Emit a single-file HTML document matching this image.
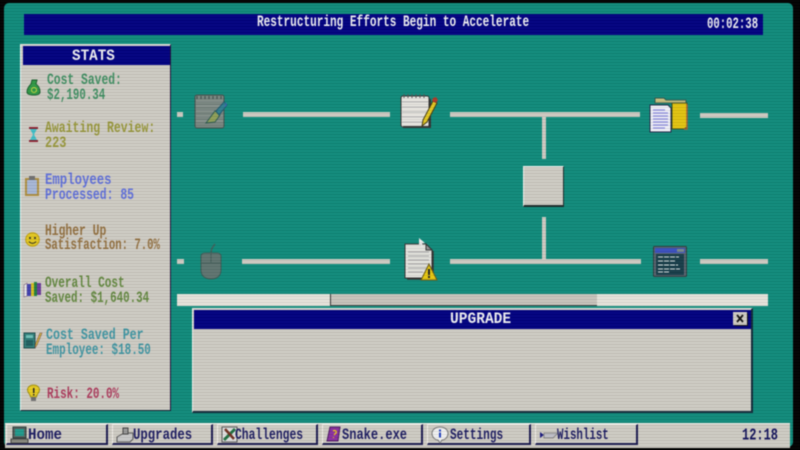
<!DOCTYPE html>
<html><head><meta charset="utf-8"><style>
html,body{margin:0;padding:0;background:#000;width:800px;height:450px;overflow:hidden}
#s{position:absolute;left:0;top:0;width:800px;height:450px;overflow:hidden;background:#000;filter:blur(.55px)}
#d{position:absolute;left:4px;top:3px;width:789px;height:444px;background:#0f8b7b;border-radius:5px}
.a{position:absolute}
.t{position:absolute;font-family:"Liberation Mono",monospace;font-weight:bold;font-size:14px;line-height:15px;white-space:nowrap;transform-origin:0 0;scale:1 1.12}
.p{position:absolute;background:#d0ccc4}
.l{position:absolute;background:#cfcbc3}
.b{position:absolute;top:424px;height:21px;background:#d0ccc4;border-top:1px solid #f2f0ea;border-left:1px solid #f2f0ea;border-right:2px solid #1a1a50;border-bottom:2px solid #1a1a50;box-sizing:border-box}
.b span{position:absolute;top:2px;font-family:"Liberation Mono",monospace;font-weight:bold;font-size:14px;line-height:15px;color:#1c1c62;white-space:nowrap;transform-origin:0 0;scale:1 1.12}
.b svg{position:absolute;left:3px;top:1px}
#o{position:absolute;left:0;top:0;width:800px;height:450px;pointer-events:none;background:repeating-linear-gradient(0deg,rgba(0,0,0,.09) 0,rgba(0,0,0,.09) 1px,rgba(255,255,255,.03) 1px,rgba(255,255,255,.03) 3px)}
</style></head><body>
<div id="s">
<div id="d"></div>

<div class="a" style="left:24px;top:14px;width:739px;height:21px;background:#000080"></div>
<div class="t" style="left:257px;top:15px;color:#f2f2f5;transform:scaleX(.79)">Restructuring Efforts Begin to Accelerate</div>
<div class="t" style="left:707px;top:17px;color:#f2f2f5;transform:scaleX(.76)">00:02:38</div>

<div class="p" style="left:20px;top:44px;width:151px;height:367px;border-top:1px solid #f5f4ef;border-left:1px solid #e8fbfa;border-right:1px solid #20103a;border-bottom:1px solid #102030;box-sizing:border-box"></div>
<div class="a" style="left:23px;top:46px;width:147px;height:19px;background:#000080"></div>
<div class="t" style="left:72px;top:49px;color:#f2f2f5;transform:scaleX(1.02)">STATS</div>

<div class="t" style="left:47px;top:73px;color:#3f8f62;transform:scaleX(.81)">Cost Saved:</div>
<div class="t" style="left:47px;top:88px;color:#3f8f62;transform:scaleX(.77)">$2,190.34</div>
<div class="t" style="left:45px;top:121px;color:#98983a;transform:scaleX(.82)">Awaiting Review:</div>
<div class="t" style="left:45px;top:136px;color:#98983a;transform:scaleX(.85)">223</div>
<div class="t" style="left:45px;top:173px;color:#5f70dc;transform:scaleX(.88)">Employees</div>
<div class="t" style="left:45px;top:188px;color:#5f70dc;transform:scaleX(.815)">Processed: 85</div>
<div class="t" style="left:45px;top:224px;color:#93703f;transform:scaleX(.81)">Higher Up</div>
<div class="t" style="left:45px;top:238px;color:#93703f;transform:scaleX(.76)">Satisfaction: 7.0%</div>
<div class="t" style="left:45px;top:276px;color:#62883f;transform:scaleX(.79)">Overall Cost</div>
<div class="t" style="left:45px;top:291px;color:#62883f;transform:scaleX(.775)">Saved: $1,640.34</div>
<div class="t" style="left:46px;top:328px;color:#3f96a3;transform:scaleX(.83)">Cost Saved Per</div>
<div class="t" style="left:46px;top:343px;color:#3f96a3;transform:scaleX(.78)">Employee: $18.50</div>
<div class="t" style="left:47px;top:387px;color:#ad3a5c;transform:scaleX(.78)">Risk: 20.0%</div>

<svg class="a" style="left:26px;top:79px" width="16" height="17" viewBox="0 0 16 17"><path d="M6 1h5l-1 4c3 2 4 5 4 8 0 2-2 3-6 3s-7-1-7-3c0-3 2-6 4-8z" fill="#2f9a45" stroke="#1c6030"/><circle cx="8" cy="11" r="2.500" fill="none" stroke="#c6d840"/></svg>
<svg class="a" style="left:28px;top:126px" width="11" height="17" viewBox="0 0 11 17"><rect x="1" y="1" width="9" height="2" fill="#8c2030"/><rect x="1" y="14" width="9" height="2" fill="#8c2030"/><path d="M2 3h7L6 8.500 9 14H2l3-5.500z" fill="#3fc0c8"/></svg>
<svg class="a" style="left:24px;top:176px" width="16" height="21" viewBox="0 0 16 21"><rect x="1" y="2" width="14" height="18" fill="#b09040"/><rect x="3" y="4" width="10" height="14" fill="#a8b8d8"/><rect x="5" y="0" width="6" height="4" fill="#707070"/></svg>
<svg class="a" style="left:25px;top:232px" width="15" height="15" viewBox="0 0 15 15"><circle cx="7.500" cy="7.500" r="6.800" fill="#e3c820" stroke="#c0a010"/><circle cx="5" cy="6" r="1" fill="#222"/><circle cx="10" cy="6" r="1" fill="#222"/><path d="M4 9.500c2 2.500 5 2.500 7 0" fill="none" stroke="#222"/></svg>
<svg class="a" style="left:23px;top:280px" width="19" height="18" viewBox="0 0 19 18"><path d="M1 5l3-2v13l-3 1z" fill="#e8e8e8" stroke="#806080" stroke-width=".6"/><rect x="4" y="4" width="4" height="12" fill="#4040b0"/><rect x="8" y="3" width="3" height="13" fill="#d8c020"/><rect x="11" y="2" width="3" height="14" fill="#208040"/><rect x="14" y="3" width="4" height="12" fill="#6a3a9a"/></svg>
<svg class="a" style="left:23px;top:332px" width="21" height="18" viewBox="0 0 21 18"><rect x="1" y="1" width="11" height="15" fill="#2f7f7a" stroke="#1f4f50"/><rect x="3" y="3" width="7" height="3" fill="#6fc0b8"/><rect x="3" y="8" width="7" height="6" fill="#1f5f60"/><path d="M19 1l-5 12-2 3 .5-4 4.500-11z" fill="#d8c040" stroke="#805040" stroke-width=".6"/></svg>
<svg class="a" style="left:26px;top:384px" width="15" height="18" viewBox="0 0 15 18"><path d="M7.500 1c4 0 6 2.500 6 5 0 3-3 4-3 7h-6c0-3-3-4-3-7 0-2.500 2-5 6-5z" fill="#e8cc20" stroke="#a09010"/><rect x="5" y="13" width="5" height="4" fill="#707070"/><rect x="7" y="4" width="1.500" height="5" fill="#222"/><rect x="7" y="10" width="1.500" height="1.500" fill="#222"/></svg>

<div class="l" style="left:177px;top:112px;width:6px;height:5px"></div>
<div class="l" style="left:243px;top:112px;width:147px;height:5px"></div>
<div class="l" style="left:450px;top:112px;width:190px;height:5px"></div>
<div class="l" style="left:700px;top:113px;width:68px;height:5px"></div>
<div class="l" style="left:177px;top:259px;width:7px;height:5px"></div>
<div class="l" style="left:242px;top:259px;width:148px;height:5px"></div>
<div class="l" style="left:450px;top:259px;width:191px;height:5px"></div>
<div class="l" style="left:700px;top:259px;width:68px;height:5px"></div>
<div class="l" style="left:542px;top:115px;width:4px;height:44px"></div>
<div class="l" style="left:542px;top:217px;width:4px;height:45px"></div>

<div class="p" style="left:523px;top:166px;width:41px;height:41px;border-top:1px solid #f5f4ef;border-left:1px solid #f5f4ef;border-right:1px solid #1c2a2a;border-bottom:2px solid #1c2a2a;box-sizing:border-box"></div>

<svg class="a" style="left:193px;top:94px" width="36" height="36" viewBox="0 0 36 36"><rect x="2" y="1" width="29" height="33" rx="2" fill="#78857f" stroke="#41524e"/><path d="M3 7h27M3 12h27M3 17h27M3 22h27M3 27h27" stroke="#8f9a94"/><path d="M4 2v3M8 2v3M12 2v3M16 2v3M20 2v3M24 2v3M28 2v3" stroke="#3d4c48"/><path d="M13 29l9-12 5 4-5 7z" fill="#8f9f58" stroke="#2c5a50"/><path d="M23 17l8-9 3 3-8 10z" fill="#2f7f90" stroke="#1d5a70"/><path d="M33 8l1 3-3 3z" fill="#3a68b0"/></svg>
<svg class="a" style="left:400px;top:93px" width="40" height="37" viewBox="0 0 40 37"><rect x="1" y="3" width="28" height="31" rx="2" fill="#e8e6e0" stroke="#333"/><path d="M3 34h27V6" fill="none" stroke="#333" stroke-width="2"/><path d="M2 9h26M2 14h26M2 19h26M2 24h26M2 29h26" stroke="#b8b8b8"/><path d="M4 1v4M8 1v4M12 1v4M16 1v4M20 1v4M24 1v4" stroke="#555"/><path d="M33 8l4 2-10 19-5 4 1-6z" fill="#e4c820" stroke="#443a10"/><path d="M33 5l3-1 2 3-2 3-4-2z" fill="#b03a28"/></svg>
<svg class="a" style="left:648px;top:95px" width="42" height="38" viewBox="0 0 42 38"><path d="M7 6V3h9l2 2h20v3H7z" fill="#c8c080" stroke="#2d5a50"/><path d="M24 8h15v24l-3 2H24z" fill="#e4c410" stroke="#3c4c20"/><path d="M36 34h3V9" fill="none" stroke="#a86030" stroke-width="1.500"/><path d="M2 10h18l3 3v24H2z" fill="#f0f0f8" stroke="#202848"/><path d="M5 15h12M5 18h15M5 21h15M5 24h15M5 27h15M5 30h15M5 33h12" stroke="#8888e0" stroke-width="1.200"/></svg>
<svg class="a" style="left:198px;top:241px" width="26" height="40" viewBox="0 0 26 40"><path d="M13 13c0-5 1-6 4-10" fill="none" stroke="#3f5f5a" stroke-width="1.500"/><path d="M3 15c0-2 2-3 4-3h12c2 0 4 1 4 3v14c0 6-4 9-10 9S3 35 3 29z" fill="#5f7470" stroke="#3a5a55"/><path d="M3 22h20M13 12v10" stroke="#445f5a"/></svg>
<svg class="a" style="left:402px;top:242px" width="36" height="40" viewBox="0 0 36 40"><path d="M3 2h21l6 6v28H3z" fill="#e4e3de" stroke="#333"/><path d="M31 9v28H5" fill="none" stroke="#333" stroke-width="1.500"/><path d="M24 2v6h6z" fill="#999" stroke="#333"/><path d="M6 10h21M6 14h21M6 18h21M6 22h21M6 26h21M6 30h15" stroke="#aeaeae" stroke-width="1.200"/><path d="M27 22l8 16H19z" fill="#e8c810" stroke="#6a5a10"/><path d="M27 27v6M27 34v2" stroke="#222" stroke-width="2"/></svg>
<svg class="a" style="left:419px;top:238px" width="7" height="9" viewBox="0 0 7 9"><path d="M0 0l6 5-3 .5 1 3-1.500 .5-1-3L0 7z" fill="#eee"/></svg>
<svg class="a" style="left:653px;top:246px" width="34" height="31" viewBox="0 0 34 31"><rect x=".5" y=".5" width="33" height="30" rx="1" fill="#5a6470" stroke="#2c3a3e"/><rect x="2" y="2" width="30" height="5" fill="#3a50c0"/><rect x="24" y="3" width="7" height="3" fill="#7a8a8a"/><rect x="3" y="8" width="28" height="21" fill="#163c48"/><path d="M5 11h21M5 15h17M5 19h20M5 23h22M5 26h12" stroke="#dfe6e6" stroke-width="1" stroke-dasharray="5 1"/></svg>

<div class="a" style="left:177px;top:294px;width:591px;height:12px;background:#e6e4dc"></div>
<div class="a" style="left:330px;top:294px;width:267px;height:12px;background:#c8c4bc;border-left:1px solid #333;border-bottom:1px solid #444;box-sizing:border-box"></div>

<div class="p" style="left:192px;top:308px;width:561px;height:105px;border-top:1px solid #f2f1ec;border-left:1px solid #f2f1ec;border-right:2px solid #102838;border-bottom:2px solid #102838;box-sizing:border-box"></div>
<div class="a" style="left:194px;top:310px;width:557px;height:19px;background:#000080"></div>
<div class="t" style="left:450px;top:312px;color:#f2f2f5;transform:scaleX(1.04)">UPGRADE</div>
<div class="a" style="left:733px;top:312px;width:14px;height:13px;background:#d0ccc4;box-shadow:1px 1px 0 #111"></div>
<svg class="a" style="left:733px;top:312px" width="14" height="13" viewBox="0 0 14 13"><path d="M4 3l6 7M10 3l-6 7" stroke="#111" stroke-width="1.800"/></svg>

<div class="a" style="left:5px;top:423px;width:785px;height:24px;background:#d0ccc4;border-top:1px solid #efeee8"></div>

<div class="b" style="left:6px;width:102px"><svg width="20" height="18" viewBox="0 0 20 18"><rect x="3" y="1" width="13" height="11" fill="#56605c" stroke="#2c3c3a"/><rect x="5" y="3" width="9" height="7" fill="#1f9a8c"/><rect x="1" y="13" width="17" height="4" fill="#8a8a80" stroke="#444"/></svg><span style="left:21px;top:3px;transform:scaleX(1.01)">Home</span></div>
<div class="b" style="left:112px;width:101px"><svg width="20" height="18" viewBox="0 0 20 18"><path d="M1 11l7-4h9v6l-3 3H1z" fill="#c8c8c8" stroke="#555"/><rect x="7" y="2" width="5" height="6" fill="#999" stroke="#444"/></svg><span style="left:20px;top:3px;transform:scaleX(.88)">Upgrades</span></div>
<div class="b" style="left:217px;width:101px"><svg width="18" height="18" viewBox="0 0 18 18"><rect x="1" y="1" width="15" height="15" fill="#e0e0e0" stroke="#555"/><path d="M3 14L14 3" stroke="#207040" stroke-width="3"/><path d="M4 3l9 10" stroke="#703020" stroke-width="2.500"/></svg><span style="left:17px;top:3px;transform:scaleX(.81)">Challenges</span></div>
<div class="b" style="left:322px;width:101px"><svg width="16" height="18" viewBox="0 0 16 18"><path d="M4 1h10l-2 14H1z" fill="#8a2fa0" stroke="#4a1a60"/><path d="M7 5c2-1 4 0 3 2l-2 2M7.500 11v1" stroke="#e8c820" fill="none" stroke-width="1.300"/></svg><span style="left:19px;top:3px;transform:scaleX(.86)">Snake.exe</span></div>
<div class="b" style="left:427px;width:104px"><svg width="18" height="18" viewBox="0 0 18 18"><path d="M9 1c5 0 8 3 8 6.500S14 14 11 14l-2 3-2-3c-3 0-6-3-6-6.500S4 1 9 1z" fill="#f0f0f0" stroke="#777"/><rect x="8" y="3.500" width="2" height="2" fill="#2040c0"/><rect x="8" y="6.500" width="2" height="5" fill="#2040c0"/></svg><span style="left:22px;top:3px;transform:scaleX(.79)">Settings</span></div>
<div class="b" style="left:535px;width:103px"><svg width="20" height="18" viewBox="0 0 20 18"><path d="M1 6l4 3-4 3z" fill="#1a1a80"/><path d="M5 7h14l-5 5H5z" fill="#c0c0c8" stroke="#888"/></svg><span style="left:21px;top:3px;transform:scaleX(.77)">Wishlist</span></div>

<div class="t" style="left:742px;top:427px;color:#10105a;font-size:15px;transform:scaleX(.8)">12:18</div>

<div id="o"></div>
</div>
</body></html>
